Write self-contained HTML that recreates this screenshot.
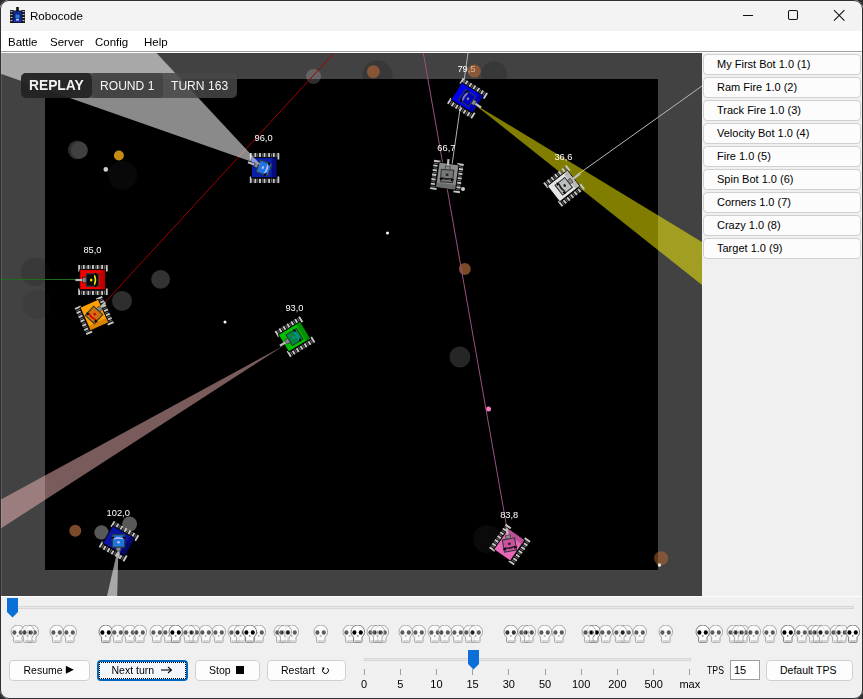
<!DOCTYPE html>
<html><head><meta charset="utf-8">
<style>
html,body{margin:0;padding:0;width:863px;height:699px;overflow:hidden;background:#2b2d31;}
*{box-sizing:border-box;}
body{font-family:"Liberation Sans", sans-serif;position:relative;}
#win{position:absolute;left:0;top:0;width:863px;height:699px;border-radius:9px;background:#f0f0f0;overflow:hidden;}
#frame{position:absolute;left:0;top:0;width:863px;height:699px;border-radius:9px;border:1px solid #2f3034;box-shadow:inset 0 0 0 1px rgba(255,255,255,0.12);pointer-events:none;}
.t{position:absolute;white-space:nowrap;color:#000;}
.bb{position:absolute;left:703px;width:158px;height:21px;border:1px solid #d0d0d0;border-radius:4px;background:#fcfcfc;font-size:11px;line-height:19px;padding-left:13px;color:#000;}
.btn{position:absolute;top:660px;height:21px;border:1px solid #d0d0d0;border-radius:4px;background:#fdfdfd;font-size:11px;line-height:19px;text-align:center;color:#000;}
.bt{top:661px;font-size:10.5px;line-height:19px;}
.tl{position:absolute;top:678px;width:40px;text-align:center;font-size:11px;line-height:13px;color:#000;}
</style></head><body>
<div id="win">
<div style="position:absolute;left:0;top:0;width:863px;height:31px;background:#f3f3f3"></div>
<div style="position:absolute;left:0;top:31px;width:863px;height:20px;background:#fff"></div>
<div style="position:absolute;left:0;top:51px;width:863px;height:1px;background:#a0a0a0"></div>
<div style="position:absolute;left:0;top:52px;width:863px;height:1px;background:#fff"></div>
<div style="position:absolute;left:0;top:596px;width:863px;height:1px;background:#fff"></div>
</div>
<svg width="863" height="699" style="position:absolute;left:0;top:0"><defs><clipPath id="bv"><rect x="0" y="53" width="702" height="543"/></clipPath></defs><g clip-path="url(#bv)"><rect x="0" y="53" width="702" height="543" fill="#424242"/><rect x="45" y="79" width="613" height="491" fill="#000"/><circle cx="377.4" cy="75.6" r="15" fill="rgba(0,0,0,0.15)"/><circle cx="494" cy="74.3" r="13" fill="rgba(0,0,0,0.15)"/><circle cx="313.5" cy="76.5" r="7.5" fill="rgba(255,255,255,0.18)"/><circle cx="373.4" cy="71.7" r="6.5" fill="rgba(200,110,50,0.55)"/><circle cx="77.2" cy="149.8" r="9.4" fill="#2c2c2c"/><circle cx="79.3" cy="150.2" r="8.5" fill="#404040"/><circle cx="118.9" cy="155.5" r="5" fill="#c48c12"/><circle cx="122.7" cy="175.3" r="14.5" fill="#080808"/><circle cx="105.8" cy="169.4" r="2.3" fill="#cfcfcf"/><circle cx="35.2" cy="271.7" r="14.3" fill="rgba(25,25,25,0.2)"/><circle cx="37.5" cy="304.3" r="14.5" fill="rgba(25,25,25,0.12)"/><circle cx="160.6" cy="279.4" r="9.4" fill="#333333"/><circle cx="122" cy="300.9" r="10" fill="#2e2e2e"/><circle cx="387.5" cy="233" r="1.5" fill="#ffffff"/><circle cx="225" cy="322" r="1.5" fill="#ffffff"/><circle cx="464.8" cy="269.1" r="6" fill="#7a4a28"/><circle cx="459.9" cy="357" r="10.5" fill="#262626"/><circle cx="488.5" cy="409" r="2.5" fill="#ff7ac0"/><circle cx="75.3" cy="530.8" r="6" fill="#7a4a2a"/><circle cx="101.5" cy="532.5" r="7.2" fill="#585858"/><circle cx="129.6" cy="524" r="7.5" fill="#585858"/><circle cx="487" cy="539" r="14" fill="#0a0a0a"/><circle cx="661.1" cy="558.3" r="7" fill="rgba(190,105,45,0.5)"/><circle cx="659.4" cy="565.1" r="1.8" fill="#dddddd"/><circle cx="463" cy="189" r="2" fill="#cccccc"/><line x1="334" y1="53" x2="98" y2="310" stroke="#a00000" stroke-width="1"/><line x1="423.3" y1="53" x2="509" y2="540" stroke="#9a5080" stroke-width="1"/><line x1="0" y1="279.5" x2="86" y2="279.5" stroke="#1a6e1a" stroke-width="1"/><line x1="468" y1="53" x2="452" y2="165" stroke="#b0b0b0" stroke-width="1"/><line x1="577" y1="175" x2="702" y2="86" stroke="#b8b8b8" stroke-width="1"/><polygon points="472.6,102.9 702,242 702,285" fill="rgba(255,250,0,0.5)"/><polygon points="284,345.4 0,500 0,529" fill="rgba(255,190,190,0.48)"/><polygon points="118.5,546 107,596 117.2,596" fill="rgba(255,255,255,0.54)"/><g transform="translate(264,168) rotate(0) scale(1.0)">
<rect x="-14.20" y="-15" width="1.9" height="6.5" fill="#c8c8c8"/>
<rect x="-9.60" y="-15" width="1.9" height="4.2" fill="#c8c8c8"/>
<rect x="-5.00" y="-15" width="1.9" height="4.2" fill="#c8c8c8"/>
<rect x="-0.40" y="-15" width="1.9" height="4.2" fill="#c8c8c8"/>
<rect x="4.20" y="-15" width="1.9" height="4.2" fill="#c8c8c8"/>
<rect x="8.80" y="-15" width="1.9" height="4.2" fill="#c8c8c8"/>
<rect x="13.40" y="-15" width="1.9" height="6.5" fill="#c8c8c8"/>
<rect x="-11.45" y="-14.7" width="1.1" height="4.2" fill="#606060"/>
<rect x="-6.85" y="-14.7" width="1.1" height="4.2" fill="#606060"/>
<rect x="-2.25" y="-14.7" width="1.1" height="4.2" fill="#606060"/>
<rect x="2.35" y="-14.7" width="1.1" height="4.2" fill="#606060"/>
<rect x="6.95" y="-14.7" width="1.1" height="4.2" fill="#606060"/>
<rect x="11.55" y="-14.7" width="1.1" height="4.2" fill="#606060"/>
<rect x="-14.20" y="8.5" width="1.9" height="6.5" fill="#c8c8c8"/>
<rect x="-9.60" y="10.8" width="1.9" height="4.2" fill="#c8c8c8"/>
<rect x="-5.00" y="10.8" width="1.9" height="4.2" fill="#c8c8c8"/>
<rect x="-0.40" y="10.8" width="1.9" height="4.2" fill="#c8c8c8"/>
<rect x="4.20" y="10.8" width="1.9" height="4.2" fill="#c8c8c8"/>
<rect x="8.80" y="10.8" width="1.9" height="4.2" fill="#c8c8c8"/>
<rect x="13.40" y="8.5" width="1.9" height="6.5" fill="#c8c8c8"/>
<rect x="-11.45" y="10.5" width="1.1" height="4.2" fill="#606060"/>
<rect x="-6.85" y="10.5" width="1.1" height="4.2" fill="#606060"/>
<rect x="-2.25" y="10.5" width="1.1" height="4.2" fill="#606060"/>
<rect x="2.35" y="10.5" width="1.1" height="4.2" fill="#606060"/>
<rect x="6.95" y="10.5" width="1.1" height="4.2" fill="#606060"/>
<rect x="11.55" y="10.5" width="1.1" height="4.2" fill="#606060"/>
<rect x="-12.6" y="-10.3" width="25.4" height="20" fill="#0b1fae" stroke="#000" stroke-width="0.8"/>
<rect x="7.8" y="-9.9" width="4.4" height="19.2" fill="#000060" opacity="0.6"/>
</g>
<g transform="translate(264,168) rotate(-160)">
<rect x="5" y="-1.1" width="12" height="2.2" fill="#bdbdbd"/>
<rect x="5" y="-2.4" width="5" height="4.8" fill="#8a8a8a" stroke="#111" stroke-width="0.5"/>
<rect x="-6.2" y="-6.2" width="12.4" height="12.4" fill="#1e74e0" stroke="#2c3838" stroke-width="1.1"/>
<path d="M-3.2 -7.6 L-1.6 -4.2 L-4.8 -4.2 Z M-3.2 7.6 L-1.6 4.2 L-4.8 4.2 Z" fill="#000"/>
<path d="M-2.2 -4.8 Q-4.8 0 -2.2 4.8 Q-3.2 0 -2.2 -4.8 Z" fill="#b8b8ff" stroke="#b8b8ff" stroke-width="1"/>
<ellipse cx="1.2" cy="0" rx="1.2" ry="1.5" fill="#b8b8ff"/>
</g><g transform="translate(467,98) rotate(32) scale(1.0)">
<rect x="-14.20" y="-15" width="1.9" height="6.5" fill="#c8c8c8"/>
<rect x="-9.60" y="-15" width="1.9" height="4.2" fill="#c8c8c8"/>
<rect x="-5.00" y="-15" width="1.9" height="4.2" fill="#c8c8c8"/>
<rect x="-0.40" y="-15" width="1.9" height="4.2" fill="#c8c8c8"/>
<rect x="4.20" y="-15" width="1.9" height="4.2" fill="#c8c8c8"/>
<rect x="8.80" y="-15" width="1.9" height="4.2" fill="#c8c8c8"/>
<rect x="13.40" y="-15" width="1.9" height="6.5" fill="#c8c8c8"/>
<rect x="-11.45" y="-14.7" width="1.1" height="4.2" fill="#606060"/>
<rect x="-6.85" y="-14.7" width="1.1" height="4.2" fill="#606060"/>
<rect x="-2.25" y="-14.7" width="1.1" height="4.2" fill="#606060"/>
<rect x="2.35" y="-14.7" width="1.1" height="4.2" fill="#606060"/>
<rect x="6.95" y="-14.7" width="1.1" height="4.2" fill="#606060"/>
<rect x="11.55" y="-14.7" width="1.1" height="4.2" fill="#606060"/>
<rect x="-14.20" y="8.5" width="1.9" height="6.5" fill="#c8c8c8"/>
<rect x="-9.60" y="10.8" width="1.9" height="4.2" fill="#c8c8c8"/>
<rect x="-5.00" y="10.8" width="1.9" height="4.2" fill="#c8c8c8"/>
<rect x="-0.40" y="10.8" width="1.9" height="4.2" fill="#c8c8c8"/>
<rect x="4.20" y="10.8" width="1.9" height="4.2" fill="#c8c8c8"/>
<rect x="8.80" y="10.8" width="1.9" height="4.2" fill="#c8c8c8"/>
<rect x="13.40" y="8.5" width="1.9" height="6.5" fill="#c8c8c8"/>
<rect x="-11.45" y="10.5" width="1.1" height="4.2" fill="#606060"/>
<rect x="-6.85" y="10.5" width="1.1" height="4.2" fill="#606060"/>
<rect x="-2.25" y="10.5" width="1.1" height="4.2" fill="#606060"/>
<rect x="2.35" y="10.5" width="1.1" height="4.2" fill="#606060"/>
<rect x="6.95" y="10.5" width="1.1" height="4.2" fill="#606060"/>
<rect x="11.55" y="10.5" width="1.1" height="4.2" fill="#606060"/>
<rect x="-12.6" y="-10.3" width="25.4" height="20" fill="#0000f0" stroke="#000" stroke-width="0.8"/>
<rect x="7.8" y="-9.9" width="4.4" height="19.2" fill="#000080" opacity="0.6"/>
</g>
<g transform="translate(467,98) rotate(34)">
<rect x="5" y="-1.1" width="12" height="2.2" fill="#bdbdbd"/>
<rect x="5" y="-2.4" width="5" height="4.8" fill="#8a8a8a" stroke="#111" stroke-width="0.5"/>
<rect x="-6.2" y="-6.2" width="12.4" height="12.4" fill="#0000c0" stroke="#2c3838" stroke-width="1.1"/>
<path d="M-3.2 -7.6 L-1.6 -4.2 L-4.8 -4.2 Z M-3.2 7.6 L-1.6 4.2 L-4.8 4.2 Z" fill="#000"/>
<path d="M-2.2 -4.8 Q-4.8 0 -2.2 4.8 Q-3.2 0 -2.2 -4.8 Z" fill="#888888" stroke="#888888" stroke-width="1"/>
<ellipse cx="1.2" cy="0" rx="1.2" ry="1.5" fill="#888888"/>
</g><g transform="translate(447,176) rotate(98) scale(1.0)">
<rect x="-14.20" y="-15" width="1.9" height="6.5" fill="#c8c8c8"/>
<rect x="-9.60" y="-15" width="1.9" height="4.2" fill="#c8c8c8"/>
<rect x="-5.00" y="-15" width="1.9" height="4.2" fill="#c8c8c8"/>
<rect x="-0.40" y="-15" width="1.9" height="4.2" fill="#c8c8c8"/>
<rect x="4.20" y="-15" width="1.9" height="4.2" fill="#c8c8c8"/>
<rect x="8.80" y="-15" width="1.9" height="4.2" fill="#c8c8c8"/>
<rect x="13.40" y="-15" width="1.9" height="6.5" fill="#c8c8c8"/>
<rect x="-11.45" y="-14.7" width="1.1" height="4.2" fill="#606060"/>
<rect x="-6.85" y="-14.7" width="1.1" height="4.2" fill="#606060"/>
<rect x="-2.25" y="-14.7" width="1.1" height="4.2" fill="#606060"/>
<rect x="2.35" y="-14.7" width="1.1" height="4.2" fill="#606060"/>
<rect x="6.95" y="-14.7" width="1.1" height="4.2" fill="#606060"/>
<rect x="11.55" y="-14.7" width="1.1" height="4.2" fill="#606060"/>
<rect x="-14.20" y="8.5" width="1.9" height="6.5" fill="#c8c8c8"/>
<rect x="-9.60" y="10.8" width="1.9" height="4.2" fill="#c8c8c8"/>
<rect x="-5.00" y="10.8" width="1.9" height="4.2" fill="#c8c8c8"/>
<rect x="-0.40" y="10.8" width="1.9" height="4.2" fill="#c8c8c8"/>
<rect x="4.20" y="10.8" width="1.9" height="4.2" fill="#c8c8c8"/>
<rect x="8.80" y="10.8" width="1.9" height="4.2" fill="#c8c8c8"/>
<rect x="13.40" y="8.5" width="1.9" height="6.5" fill="#c8c8c8"/>
<rect x="-11.45" y="10.5" width="1.1" height="4.2" fill="#606060"/>
<rect x="-6.85" y="10.5" width="1.1" height="4.2" fill="#606060"/>
<rect x="-2.25" y="10.5" width="1.1" height="4.2" fill="#606060"/>
<rect x="2.35" y="10.5" width="1.1" height="4.2" fill="#606060"/>
<rect x="6.95" y="10.5" width="1.1" height="4.2" fill="#606060"/>
<rect x="11.55" y="10.5" width="1.1" height="4.2" fill="#606060"/>
<rect x="-12.6" y="-10.3" width="25.4" height="20" fill="#8c8c8c" stroke="#000" stroke-width="0.8"/>
<rect x="7.8" y="-9.9" width="4.4" height="19.2" fill="#555" opacity="0.6"/>
</g>
<g transform="translate(447,176) rotate(-85)">
<rect x="5" y="-1.1" width="12" height="2.2" fill="#bdbdbd"/>
<rect x="5" y="-2.4" width="5" height="4.8" fill="#8a8a8a" stroke="#111" stroke-width="0.5"/>
<rect x="-6.2" y="-6.2" width="12.4" height="12.4" fill="#777777" stroke="#2c3838" stroke-width="1.1"/>
<path d="M-3.2 -7.6 L-1.6 -4.2 L-4.8 -4.2 Z M-3.2 7.6 L-1.6 4.2 L-4.8 4.2 Z" fill="#000"/>
<path d="M-2.2 -4.8 Q-4.8 0 -2.2 4.8 Q-3.2 0 -2.2 -4.8 Z" fill="#222" stroke="#222" stroke-width="1"/>
<ellipse cx="1.2" cy="0" rx="1.2" ry="1.5" fill="#222"/>
</g><g transform="translate(563.7,186.3) rotate(-38) scale(1.0)">
<rect x="-14.20" y="-15" width="1.9" height="6.5" fill="#c8c8c8"/>
<rect x="-9.60" y="-15" width="1.9" height="4.2" fill="#c8c8c8"/>
<rect x="-5.00" y="-15" width="1.9" height="4.2" fill="#c8c8c8"/>
<rect x="-0.40" y="-15" width="1.9" height="4.2" fill="#c8c8c8"/>
<rect x="4.20" y="-15" width="1.9" height="4.2" fill="#c8c8c8"/>
<rect x="8.80" y="-15" width="1.9" height="4.2" fill="#c8c8c8"/>
<rect x="13.40" y="-15" width="1.9" height="6.5" fill="#c8c8c8"/>
<rect x="-11.45" y="-14.7" width="1.1" height="4.2" fill="#606060"/>
<rect x="-6.85" y="-14.7" width="1.1" height="4.2" fill="#606060"/>
<rect x="-2.25" y="-14.7" width="1.1" height="4.2" fill="#606060"/>
<rect x="2.35" y="-14.7" width="1.1" height="4.2" fill="#606060"/>
<rect x="6.95" y="-14.7" width="1.1" height="4.2" fill="#606060"/>
<rect x="11.55" y="-14.7" width="1.1" height="4.2" fill="#606060"/>
<rect x="-14.20" y="8.5" width="1.9" height="6.5" fill="#c8c8c8"/>
<rect x="-9.60" y="10.8" width="1.9" height="4.2" fill="#c8c8c8"/>
<rect x="-5.00" y="10.8" width="1.9" height="4.2" fill="#c8c8c8"/>
<rect x="-0.40" y="10.8" width="1.9" height="4.2" fill="#c8c8c8"/>
<rect x="4.20" y="10.8" width="1.9" height="4.2" fill="#c8c8c8"/>
<rect x="8.80" y="10.8" width="1.9" height="4.2" fill="#c8c8c8"/>
<rect x="13.40" y="8.5" width="1.9" height="6.5" fill="#c8c8c8"/>
<rect x="-11.45" y="10.5" width="1.1" height="4.2" fill="#606060"/>
<rect x="-6.85" y="10.5" width="1.1" height="4.2" fill="#606060"/>
<rect x="-2.25" y="10.5" width="1.1" height="4.2" fill="#606060"/>
<rect x="2.35" y="10.5" width="1.1" height="4.2" fill="#606060"/>
<rect x="6.95" y="10.5" width="1.1" height="4.2" fill="#606060"/>
<rect x="11.55" y="10.5" width="1.1" height="4.2" fill="#606060"/>
<rect x="-12.6" y="-10.3" width="25.4" height="20" fill="#e6e6e6" stroke="#000" stroke-width="0.8"/>
<rect x="7.8" y="-9.9" width="4.4" height="19.2" fill="#999" opacity="0.6"/>
</g>
<g transform="translate(563.7,186.3) rotate(-38)">
<rect x="5" y="-1.1" width="16" height="2.2" fill="#bdbdbd"/>
<rect x="5" y="-2.4" width="5" height="4.8" fill="#8a8a8a" stroke="#111" stroke-width="0.5"/>
<rect x="-6.2" y="-6.2" width="12.4" height="12.4" fill="#bdbdbd" stroke="#2c3838" stroke-width="1.1"/>
<path d="M-3.2 -7.6 L-1.6 -4.2 L-4.8 -4.2 Z M-3.2 7.6 L-1.6 4.2 L-4.8 4.2 Z" fill="#000"/>
<path d="M-2.2 -4.8 Q-4.8 0 -2.2 4.8 Q-3.2 0 -2.2 -4.8 Z" fill="#222" stroke="#222" stroke-width="1"/>
<ellipse cx="1.2" cy="0" rx="1.2" ry="1.5" fill="#222"/>
</g><g transform="translate(92.4,280) rotate(0) scale(1.0)">
<rect x="-14.20" y="-15" width="1.9" height="6.5" fill="#c8c8c8"/>
<rect x="-9.60" y="-15" width="1.9" height="4.2" fill="#c8c8c8"/>
<rect x="-5.00" y="-15" width="1.9" height="4.2" fill="#c8c8c8"/>
<rect x="-0.40" y="-15" width="1.9" height="4.2" fill="#c8c8c8"/>
<rect x="4.20" y="-15" width="1.9" height="4.2" fill="#c8c8c8"/>
<rect x="8.80" y="-15" width="1.9" height="4.2" fill="#c8c8c8"/>
<rect x="13.40" y="-15" width="1.9" height="6.5" fill="#c8c8c8"/>
<rect x="-11.45" y="-14.7" width="1.1" height="4.2" fill="#606060"/>
<rect x="-6.85" y="-14.7" width="1.1" height="4.2" fill="#606060"/>
<rect x="-2.25" y="-14.7" width="1.1" height="4.2" fill="#606060"/>
<rect x="2.35" y="-14.7" width="1.1" height="4.2" fill="#606060"/>
<rect x="6.95" y="-14.7" width="1.1" height="4.2" fill="#606060"/>
<rect x="11.55" y="-14.7" width="1.1" height="4.2" fill="#606060"/>
<rect x="-14.20" y="8.5" width="1.9" height="6.5" fill="#c8c8c8"/>
<rect x="-9.60" y="10.8" width="1.9" height="4.2" fill="#c8c8c8"/>
<rect x="-5.00" y="10.8" width="1.9" height="4.2" fill="#c8c8c8"/>
<rect x="-0.40" y="10.8" width="1.9" height="4.2" fill="#c8c8c8"/>
<rect x="4.20" y="10.8" width="1.9" height="4.2" fill="#c8c8c8"/>
<rect x="8.80" y="10.8" width="1.9" height="4.2" fill="#c8c8c8"/>
<rect x="13.40" y="8.5" width="1.9" height="6.5" fill="#c8c8c8"/>
<rect x="-11.45" y="10.5" width="1.1" height="4.2" fill="#606060"/>
<rect x="-6.85" y="10.5" width="1.1" height="4.2" fill="#606060"/>
<rect x="-2.25" y="10.5" width="1.1" height="4.2" fill="#606060"/>
<rect x="2.35" y="10.5" width="1.1" height="4.2" fill="#606060"/>
<rect x="6.95" y="10.5" width="1.1" height="4.2" fill="#606060"/>
<rect x="11.55" y="10.5" width="1.1" height="4.2" fill="#606060"/>
<rect x="-12.6" y="-10.3" width="25.4" height="20" fill="#f00000" stroke="#000" stroke-width="0.8"/>
<rect x="7.8" y="-9.9" width="4.4" height="19.2" fill="#a00000" opacity="0.6"/>
</g>
<g transform="translate(92.4,280) rotate(180)">
<rect x="5" y="-1.1" width="12" height="2.2" fill="#bdbdbd"/>
<rect x="5" y="-2.4" width="5" height="4.8" fill="#8a8a8a" stroke="#111" stroke-width="0.5"/>
<rect x="-6.2" y="-6.2" width="12.4" height="12.4" fill="#0a0a0a" stroke="#2c3838" stroke-width="1.1"/>
<path d="M-3.2 -7.6 L-1.6 -4.2 L-4.8 -4.2 Z M-3.2 7.6 L-1.6 4.2 L-4.8 4.2 Z" fill="#000"/>
<path d="M-2.2 -4.8 Q-4.8 0 -2.2 4.8 Q-3.2 0 -2.2 -4.8 Z" fill="#f0f000" stroke="#f0f000" stroke-width="1"/>
<ellipse cx="1.2" cy="0" rx="1.2" ry="1.5" fill="#f0f000"/>
</g><g transform="translate(94,315) rotate(66) scale(1.0)">
<rect x="-14.20" y="-15" width="1.9" height="6.5" fill="#c8c8c8"/>
<rect x="-9.60" y="-15" width="1.9" height="4.2" fill="#c8c8c8"/>
<rect x="-5.00" y="-15" width="1.9" height="4.2" fill="#c8c8c8"/>
<rect x="-0.40" y="-15" width="1.9" height="4.2" fill="#c8c8c8"/>
<rect x="4.20" y="-15" width="1.9" height="4.2" fill="#c8c8c8"/>
<rect x="8.80" y="-15" width="1.9" height="4.2" fill="#c8c8c8"/>
<rect x="13.40" y="-15" width="1.9" height="6.5" fill="#c8c8c8"/>
<rect x="-11.45" y="-14.7" width="1.1" height="4.2" fill="#606060"/>
<rect x="-6.85" y="-14.7" width="1.1" height="4.2" fill="#606060"/>
<rect x="-2.25" y="-14.7" width="1.1" height="4.2" fill="#606060"/>
<rect x="2.35" y="-14.7" width="1.1" height="4.2" fill="#606060"/>
<rect x="6.95" y="-14.7" width="1.1" height="4.2" fill="#606060"/>
<rect x="11.55" y="-14.7" width="1.1" height="4.2" fill="#606060"/>
<rect x="-14.20" y="8.5" width="1.9" height="6.5" fill="#c8c8c8"/>
<rect x="-9.60" y="10.8" width="1.9" height="4.2" fill="#c8c8c8"/>
<rect x="-5.00" y="10.8" width="1.9" height="4.2" fill="#c8c8c8"/>
<rect x="-0.40" y="10.8" width="1.9" height="4.2" fill="#c8c8c8"/>
<rect x="4.20" y="10.8" width="1.9" height="4.2" fill="#c8c8c8"/>
<rect x="8.80" y="10.8" width="1.9" height="4.2" fill="#c8c8c8"/>
<rect x="13.40" y="8.5" width="1.9" height="6.5" fill="#c8c8c8"/>
<rect x="-11.45" y="10.5" width="1.1" height="4.2" fill="#606060"/>
<rect x="-6.85" y="10.5" width="1.1" height="4.2" fill="#606060"/>
<rect x="-2.25" y="10.5" width="1.1" height="4.2" fill="#606060"/>
<rect x="2.35" y="10.5" width="1.1" height="4.2" fill="#606060"/>
<rect x="6.95" y="10.5" width="1.1" height="4.2" fill="#606060"/>
<rect x="11.55" y="10.5" width="1.1" height="4.2" fill="#606060"/>
<rect x="-12.6" y="-10.3" width="25.4" height="20" fill="#ffa000" stroke="#000" stroke-width="0.8"/>
<rect x="7.8" y="-9.9" width="4.4" height="19.2" fill="#c07000" opacity="0.6"/>
</g>
<g transform="translate(94,315) rotate(-48)">
<rect x="5" y="-1.1" width="12" height="2.2" fill="#bdbdbd"/>
<rect x="5" y="-2.4" width="5" height="4.8" fill="#8a8a8a" stroke="#111" stroke-width="0.5"/>
<rect x="-6.2" y="-6.2" width="12.4" height="12.4" fill="#d07010" stroke="#2c3838" stroke-width="1.1"/>
<path d="M-3.2 -7.6 L-1.6 -4.2 L-4.8 -4.2 Z M-3.2 7.6 L-1.6 4.2 L-4.8 4.2 Z" fill="#000"/>
<path d="M-2.2 -4.8 Q-4.8 0 -2.2 4.8 Q-3.2 0 -2.2 -4.8 Z" fill="#d00000" stroke="#d00000" stroke-width="1"/>
<ellipse cx="1.2" cy="0" rx="1.2" ry="1.5" fill="#d00000"/>
</g><g transform="translate(294.5,337) rotate(-31) scale(1.0)">
<rect x="-14.20" y="-15" width="1.9" height="6.5" fill="#c8c8c8"/>
<rect x="-9.60" y="-15" width="1.9" height="4.2" fill="#c8c8c8"/>
<rect x="-5.00" y="-15" width="1.9" height="4.2" fill="#c8c8c8"/>
<rect x="-0.40" y="-15" width="1.9" height="4.2" fill="#c8c8c8"/>
<rect x="4.20" y="-15" width="1.9" height="4.2" fill="#c8c8c8"/>
<rect x="8.80" y="-15" width="1.9" height="4.2" fill="#c8c8c8"/>
<rect x="13.40" y="-15" width="1.9" height="6.5" fill="#c8c8c8"/>
<rect x="-11.45" y="-14.7" width="1.1" height="4.2" fill="#606060"/>
<rect x="-6.85" y="-14.7" width="1.1" height="4.2" fill="#606060"/>
<rect x="-2.25" y="-14.7" width="1.1" height="4.2" fill="#606060"/>
<rect x="2.35" y="-14.7" width="1.1" height="4.2" fill="#606060"/>
<rect x="6.95" y="-14.7" width="1.1" height="4.2" fill="#606060"/>
<rect x="11.55" y="-14.7" width="1.1" height="4.2" fill="#606060"/>
<rect x="-14.20" y="8.5" width="1.9" height="6.5" fill="#c8c8c8"/>
<rect x="-9.60" y="10.8" width="1.9" height="4.2" fill="#c8c8c8"/>
<rect x="-5.00" y="10.8" width="1.9" height="4.2" fill="#c8c8c8"/>
<rect x="-0.40" y="10.8" width="1.9" height="4.2" fill="#c8c8c8"/>
<rect x="4.20" y="10.8" width="1.9" height="4.2" fill="#c8c8c8"/>
<rect x="8.80" y="10.8" width="1.9" height="4.2" fill="#c8c8c8"/>
<rect x="13.40" y="8.5" width="1.9" height="6.5" fill="#c8c8c8"/>
<rect x="-11.45" y="10.5" width="1.1" height="4.2" fill="#606060"/>
<rect x="-6.85" y="10.5" width="1.1" height="4.2" fill="#606060"/>
<rect x="-2.25" y="10.5" width="1.1" height="4.2" fill="#606060"/>
<rect x="2.35" y="10.5" width="1.1" height="4.2" fill="#606060"/>
<rect x="6.95" y="10.5" width="1.1" height="4.2" fill="#606060"/>
<rect x="11.55" y="10.5" width="1.1" height="4.2" fill="#606060"/>
<rect x="-12.6" y="-10.3" width="25.4" height="20" fill="#00c000" stroke="#000" stroke-width="0.8"/>
<rect x="7.8" y="-9.9" width="4.4" height="19.2" fill="#007000" opacity="0.6"/>
</g>
<g transform="translate(294.5,337) rotate(149)">
<rect x="5" y="-1.1" width="12" height="2.2" fill="#bdbdbd"/>
<rect x="5" y="-2.4" width="5" height="4.8" fill="#8a8a8a" stroke="#111" stroke-width="0.5"/>
<rect x="-6.2" y="-6.2" width="12.4" height="12.4" fill="#008840" stroke="#2c3838" stroke-width="1.1"/>
<path d="M-3.2 -7.6 L-1.6 -4.2 L-4.8 -4.2 Z M-3.2 7.6 L-1.6 4.2 L-4.8 4.2 Z" fill="#000"/>
<path d="M-2.2 -4.8 Q-4.8 0 -2.2 4.8 Q-3.2 0 -2.2 -4.8 Z" fill="#0090a0" stroke="#0090a0" stroke-width="1"/>
<ellipse cx="1.2" cy="0" rx="1.2" ry="1.5" fill="#0090a0"/>
</g><g transform="translate(118.5,541) rotate(30) scale(1.0)">
<rect x="-14.20" y="-15" width="1.9" height="6.5" fill="#c8c8c8"/>
<rect x="-9.60" y="-15" width="1.9" height="4.2" fill="#c8c8c8"/>
<rect x="-5.00" y="-15" width="1.9" height="4.2" fill="#c8c8c8"/>
<rect x="-0.40" y="-15" width="1.9" height="4.2" fill="#c8c8c8"/>
<rect x="4.20" y="-15" width="1.9" height="4.2" fill="#c8c8c8"/>
<rect x="8.80" y="-15" width="1.9" height="4.2" fill="#c8c8c8"/>
<rect x="13.40" y="-15" width="1.9" height="6.5" fill="#c8c8c8"/>
<rect x="-11.45" y="-14.7" width="1.1" height="4.2" fill="#606060"/>
<rect x="-6.85" y="-14.7" width="1.1" height="4.2" fill="#606060"/>
<rect x="-2.25" y="-14.7" width="1.1" height="4.2" fill="#606060"/>
<rect x="2.35" y="-14.7" width="1.1" height="4.2" fill="#606060"/>
<rect x="6.95" y="-14.7" width="1.1" height="4.2" fill="#606060"/>
<rect x="11.55" y="-14.7" width="1.1" height="4.2" fill="#606060"/>
<rect x="-14.20" y="8.5" width="1.9" height="6.5" fill="#c8c8c8"/>
<rect x="-9.60" y="10.8" width="1.9" height="4.2" fill="#c8c8c8"/>
<rect x="-5.00" y="10.8" width="1.9" height="4.2" fill="#c8c8c8"/>
<rect x="-0.40" y="10.8" width="1.9" height="4.2" fill="#c8c8c8"/>
<rect x="4.20" y="10.8" width="1.9" height="4.2" fill="#c8c8c8"/>
<rect x="8.80" y="10.8" width="1.9" height="4.2" fill="#c8c8c8"/>
<rect x="13.40" y="8.5" width="1.9" height="6.5" fill="#c8c8c8"/>
<rect x="-11.45" y="10.5" width="1.1" height="4.2" fill="#606060"/>
<rect x="-6.85" y="10.5" width="1.1" height="4.2" fill="#606060"/>
<rect x="-2.25" y="10.5" width="1.1" height="4.2" fill="#606060"/>
<rect x="2.35" y="10.5" width="1.1" height="4.2" fill="#606060"/>
<rect x="6.95" y="10.5" width="1.1" height="4.2" fill="#606060"/>
<rect x="11.55" y="10.5" width="1.1" height="4.2" fill="#606060"/>
<rect x="-12.6" y="-10.3" width="25.4" height="20" fill="#0a14a0" stroke="#000" stroke-width="0.8"/>
<rect x="7.8" y="-9.9" width="4.4" height="19.2" fill="#000050" opacity="0.6"/>
</g>
<g transform="translate(118.5,541) rotate(90)">
<rect x="5" y="-1.1" width="12" height="2.2" fill="#bdbdbd"/>
<rect x="5" y="-2.4" width="5" height="4.8" fill="#8a8a8a" stroke="#111" stroke-width="0.5"/>
<rect x="-6.2" y="-6.2" width="12.4" height="12.4" fill="#1e78dc" stroke="#2c3838" stroke-width="1.1"/>
<path d="M-3.2 -7.6 L-1.6 -4.2 L-4.8 -4.2 Z M-3.2 7.6 L-1.6 4.2 L-4.8 4.2 Z" fill="#000"/>
<path d="M-2.2 -4.8 Q-4.8 0 -2.2 4.8 Q-3.2 0 -2.2 -4.8 Z" fill="#c0b0ff" stroke="#c0b0ff" stroke-width="1"/>
<ellipse cx="1.2" cy="0" rx="1.2" ry="1.5" fill="#c0b0ff"/>
</g><g transform="translate(509.5,545) rotate(-55) scale(1.0)">
<rect x="-14.20" y="-15" width="1.9" height="6.5" fill="#c8c8c8"/>
<rect x="-9.60" y="-15" width="1.9" height="4.2" fill="#c8c8c8"/>
<rect x="-5.00" y="-15" width="1.9" height="4.2" fill="#c8c8c8"/>
<rect x="-0.40" y="-15" width="1.9" height="4.2" fill="#c8c8c8"/>
<rect x="4.20" y="-15" width="1.9" height="4.2" fill="#c8c8c8"/>
<rect x="8.80" y="-15" width="1.9" height="4.2" fill="#c8c8c8"/>
<rect x="13.40" y="-15" width="1.9" height="6.5" fill="#c8c8c8"/>
<rect x="-11.45" y="-14.7" width="1.1" height="4.2" fill="#606060"/>
<rect x="-6.85" y="-14.7" width="1.1" height="4.2" fill="#606060"/>
<rect x="-2.25" y="-14.7" width="1.1" height="4.2" fill="#606060"/>
<rect x="2.35" y="-14.7" width="1.1" height="4.2" fill="#606060"/>
<rect x="6.95" y="-14.7" width="1.1" height="4.2" fill="#606060"/>
<rect x="11.55" y="-14.7" width="1.1" height="4.2" fill="#606060"/>
<rect x="-14.20" y="8.5" width="1.9" height="6.5" fill="#c8c8c8"/>
<rect x="-9.60" y="10.8" width="1.9" height="4.2" fill="#c8c8c8"/>
<rect x="-5.00" y="10.8" width="1.9" height="4.2" fill="#c8c8c8"/>
<rect x="-0.40" y="10.8" width="1.9" height="4.2" fill="#c8c8c8"/>
<rect x="4.20" y="10.8" width="1.9" height="4.2" fill="#c8c8c8"/>
<rect x="8.80" y="10.8" width="1.9" height="4.2" fill="#c8c8c8"/>
<rect x="13.40" y="8.5" width="1.9" height="6.5" fill="#c8c8c8"/>
<rect x="-11.45" y="10.5" width="1.1" height="4.2" fill="#606060"/>
<rect x="-6.85" y="10.5" width="1.1" height="4.2" fill="#606060"/>
<rect x="-2.25" y="10.5" width="1.1" height="4.2" fill="#606060"/>
<rect x="2.35" y="10.5" width="1.1" height="4.2" fill="#606060"/>
<rect x="6.95" y="10.5" width="1.1" height="4.2" fill="#606060"/>
<rect x="11.55" y="10.5" width="1.1" height="4.2" fill="#606060"/>
<rect x="-12.6" y="-10.3" width="25.4" height="20" fill="#e868b8" stroke="#000" stroke-width="0.8"/>
<rect x="7.8" y="-9.9" width="4.4" height="19.2" fill="#a04080" opacity="0.6"/>
</g>
<g transform="translate(509.5,545) rotate(-100)">
<rect x="5" y="-1.1" width="12" height="2.2" fill="#bdbdbd"/>
<rect x="5" y="-2.4" width="5" height="4.8" fill="#8a8a8a" stroke="#111" stroke-width="0.5"/>
<rect x="-6.2" y="-6.2" width="12.4" height="12.4" fill="#d050a0" stroke="#2c3838" stroke-width="1.1"/>
<path d="M-3.2 -7.6 L-1.6 -4.2 L-4.8 -4.2 Z M-3.2 7.6 L-1.6 4.2 L-4.8 4.2 Z" fill="#000"/>
<path d="M-2.2 -4.8 Q-4.8 0 -2.2 4.8 Q-3.2 0 -2.2 -4.8 Z" fill="#222" stroke="#222" stroke-width="1"/>
<ellipse cx="1.2" cy="0" rx="1.2" ry="1.5" fill="#222"/>
</g><polygon points="261,165 156.5,53 0,53 0,73.5" fill="rgba(255,255,255,0.54)"/></g></svg><svg width="863" height="699" style="position:absolute;left:0;top:0;will-change:transform"><text x="263.6" y="141" text-anchor="middle" font-family="Liberation Sans" font-size="9.3" fill="#fff" >96,0</text><text x="466.5" y="72" text-anchor="middle" font-family="Liberation Sans" font-size="9.3" fill="#fff" >79,5</text><text x="446.4" y="151" text-anchor="middle" font-family="Liberation Sans" font-size="9.3" fill="#fff" >66,7</text><text x="563.5" y="160" text-anchor="middle" font-family="Liberation Sans" font-size="9.3" fill="#fff" >36,6</text><text x="92.5" y="253" text-anchor="middle" font-family="Liberation Sans" font-size="9.3" fill="#fff" >85,0</text><text x="294.5" y="311" text-anchor="middle" font-family="Liberation Sans" font-size="9.3" fill="#fff" >93,0</text><text x="118.2" y="516" text-anchor="middle" font-family="Liberation Sans" font-size="9.3" fill="#fff" >102,0</text><text x="509.2" y="518" text-anchor="middle" font-family="Liberation Sans" font-size="9.3" fill="#fff" >83,8</text><circle cx="474.3" cy="71.1" r="6.5" fill="rgba(200,110,50,0.55)"/></svg>
<svg style="position:absolute;left:736px;top:5px" width="120" height="22">
<line x1="7" y1="10.5" x2="17" y2="10.5" stroke="#111" stroke-width="1"/>
<rect x="52.5" y="5.5" width="9" height="9" rx="1.5" fill="none" stroke="#111" stroke-width="1.05"/>
<path d="M98 5.2 L108.4 15.6 M108.4 5.2 L98 15.6" stroke="#111" stroke-width="1.1"/>
</svg>
<svg style="position:absolute;left:10px;top:7px" width="15" height="17" viewBox="0 0 15 17">
<rect x="6.2" y="0" width="2.6" height="5" fill="#111"/>
<rect x="0" y="3" width="3.5" height="13" fill="#222"/><rect x="11.5" y="3" width="3.5" height="13" fill="#222"/>
<rect x="0.5" y="4" width="2.5" height="1" fill="#bbb"/><rect x="0.5" y="7" width="2.5" height="1" fill="#bbb"/><rect x="0.5" y="10" width="2.5" height="1" fill="#bbb"/><rect x="0.5" y="13" width="2.5" height="1" fill="#bbb"/>
<rect x="12" y="4" width="2.5" height="1" fill="#bbb"/><rect x="12" y="7" width="2.5" height="1" fill="#bbb"/><rect x="12" y="10" width="2.5" height="1" fill="#bbb"/><rect x="12" y="13" width="2.5" height="1" fill="#bbb"/>
<rect x="3" y="4" width="9" height="11.5" fill="#1530b8" stroke="#000" stroke-width="0.8"/>
<rect x="5" y="7" width="5" height="5" fill="#2a7ae0" stroke="#000" stroke-width="0.6"/>
<rect x="6" y="12" width="3" height="1.5" fill="#c8c0ff"/>
</svg>
<div class="t" style="left:30px;top:9px;font-size:11.6px;line-height:14px">Robocode</div>
<div class="t" style="left:8px;top:35px;font-size:11.5px;line-height:14px">Battle</div>
<div class="t" style="left:50px;top:35px;font-size:11.5px;line-height:14px">Server</div>
<div class="t" style="left:95px;top:35px;font-size:11.5px;line-height:14px">Config</div>
<div class="t" style="left:144px;top:35px;font-size:11.5px;line-height:14px">Help</div>
<!-- overlay -->
<div style="position:absolute;left:21px;top:73px;width:216px;height:25px;border-radius:5px;background:rgba(70,70,70,0.85)"></div>
<div style="position:absolute;left:21px;top:73px;width:71px;height:25px;border-radius:5px;background:rgba(25,25,25,0.75)"></div>
<div style="position:absolute;left:92px;top:73px;width:71px;height:25px;border-radius:4px;background:rgba(40,40,40,0.3)"></div>
<div class="t" style="left:29px;top:78px;font-size:13.8px;font-weight:bold;line-height:16px;color:#f2f2f2">REPLAY</div>
<div class="t" style="left:100px;top:78px;font-size:12.1px;line-height:16px;color:#f6f6f6">ROUND 1</div>
<div class="t" style="left:171px;top:78px;font-size:12.1px;line-height:16px;color:#f6f6f6">TURN 163</div>
<div style="position:absolute;left:702px;top:53px;width:160px;height:543px;background:#f0f0f0"></div>
<div class="bb" style="top:54px">My First Bot 1.0 (1)</div>
<div class="bb" style="top:77px">Ram Fire 1.0 (2)</div>
<div class="bb" style="top:100px">Track Fire 1.0 (3)</div>
<div class="bb" style="top:123px">Velocity Bot 1.0 (4)</div>
<div class="bb" style="top:146px">Fire 1.0 (5)</div>
<div class="bb" style="top:169px">Spin Bot 1.0 (6)</div>
<div class="bb" style="top:192px">Corners 1.0 (7)</div>
<div class="bb" style="top:215px">Crazy 1.0 (8)</div>
<div class="bb" style="top:238px">Target 1.0 (9)</div>
<!-- slider -->
<div style="position:absolute;left:7px;top:606px;width:847px;height:3px;border:1px solid #d6d6d6;background:#e8e8e8"></div>
<svg style="position:absolute;left:7px;top:598px" width="12" height="20"><path d="M0 0 H11 V14 L5.5 19.5 L0 14 Z" fill="#0a6fd6"/></svg>
<svg style="position:absolute;left:9.5px;top:624.5px;opacity:0.62" width="16" height="19" viewBox="-0.5 -0.5 16 19"><path d="M3.1 11.65 A6.8 6.8 0 1 1 11.5 11.65 L11.5 16.2 Q11.5 16.8 10.9 16.8 L3.7 16.8 Q3.1 16.8 3.1 16.2 Z" fill="#fff" stroke="#7a7a7a" stroke-width="1"/><ellipse cx="3.9" cy="6.9" rx="2.05" ry="2.25" fill="#000"/><ellipse cx="10.3" cy="6.9" rx="2.05" ry="2.25" fill="#000"/><ellipse cx="7.2" cy="10.4" rx="1" ry="0.6" fill="#555"/><rect x="4.2" y="14.6" width="6.2" height="1.8" fill="#c4c4c4"/></svg>
<svg style="position:absolute;left:23.5px;top:624.5px;opacity:0.62" width="16" height="19" viewBox="-0.5 -0.5 16 19"><path d="M3.1 11.65 A6.8 6.8 0 1 1 11.5 11.65 L11.5 16.2 Q11.5 16.8 10.9 16.8 L3.7 16.8 Q3.1 16.8 3.1 16.2 Z" fill="#fff" stroke="#7a7a7a" stroke-width="1"/><ellipse cx="3.9" cy="6.9" rx="2.05" ry="2.25" fill="#000"/><ellipse cx="10.3" cy="6.9" rx="2.05" ry="2.25" fill="#000"/><ellipse cx="7.2" cy="10.4" rx="1" ry="0.6" fill="#555"/><rect x="4.2" y="14.6" width="6.2" height="1.8" fill="#c4c4c4"/></svg>
<svg style="position:absolute;left:19.5px;top:624.5px;opacity:0.62" width="16" height="19" viewBox="-0.5 -0.5 16 19"><path d="M3.1 11.65 A6.8 6.8 0 1 1 11.5 11.65 L11.5 16.2 Q11.5 16.8 10.9 16.8 L3.7 16.8 Q3.1 16.8 3.1 16.2 Z" fill="#fff" stroke="#7a7a7a" stroke-width="1"/><ellipse cx="3.9" cy="6.9" rx="2.05" ry="2.25" fill="#000"/><ellipse cx="10.3" cy="6.9" rx="2.05" ry="2.25" fill="#000"/><ellipse cx="7.2" cy="10.4" rx="1" ry="0.6" fill="#555"/><rect x="4.2" y="14.6" width="6.2" height="1.8" fill="#c4c4c4"/></svg>
<svg style="position:absolute;left:48.5px;top:624.5px;opacity:0.62" width="16" height="19" viewBox="-0.5 -0.5 16 19"><path d="M3.1 11.65 A6.8 6.8 0 1 1 11.5 11.65 L11.5 16.2 Q11.5 16.8 10.9 16.8 L3.7 16.8 Q3.1 16.8 3.1 16.2 Z" fill="#fff" stroke="#7a7a7a" stroke-width="1"/><ellipse cx="3.9" cy="6.9" rx="2.05" ry="2.25" fill="#000"/><ellipse cx="10.3" cy="6.9" rx="2.05" ry="2.25" fill="#000"/><ellipse cx="7.2" cy="10.4" rx="1" ry="0.6" fill="#555"/><rect x="4.2" y="14.6" width="6.2" height="1.8" fill="#c4c4c4"/></svg>
<svg style="position:absolute;left:61.5px;top:624.5px;opacity:0.62" width="16" height="19" viewBox="-0.5 -0.5 16 19"><path d="M3.1 11.65 A6.8 6.8 0 1 1 11.5 11.65 L11.5 16.2 Q11.5 16.8 10.9 16.8 L3.7 16.8 Q3.1 16.8 3.1 16.2 Z" fill="#fff" stroke="#7a7a7a" stroke-width="1"/><ellipse cx="3.9" cy="6.9" rx="2.05" ry="2.25" fill="#000"/><ellipse cx="10.3" cy="6.9" rx="2.05" ry="2.25" fill="#000"/><ellipse cx="7.2" cy="10.4" rx="1" ry="0.6" fill="#555"/><rect x="4.2" y="14.6" width="6.2" height="1.8" fill="#c4c4c4"/></svg>
<svg style="position:absolute;left:97.5px;top:624.5px;opacity:1" width="16" height="19" viewBox="-0.5 -0.5 16 19"><path d="M3.1 11.65 A6.8 6.8 0 1 1 11.5 11.65 L11.5 16.2 Q11.5 16.8 10.9 16.8 L3.7 16.8 Q3.1 16.8 3.1 16.2 Z" fill="#fff" stroke="#7a7a7a" stroke-width="1"/><ellipse cx="3.9" cy="6.9" rx="2.05" ry="2.25" fill="#000"/><ellipse cx="10.3" cy="6.9" rx="2.05" ry="2.25" fill="#000"/><ellipse cx="7.2" cy="10.4" rx="1" ry="0.6" fill="#555"/><rect x="4.2" y="14.6" width="6.2" height="1.8" fill="#c4c4c4"/></svg>
<svg style="position:absolute;left:109.5px;top:624.5px;opacity:0.62" width="16" height="19" viewBox="-0.5 -0.5 16 19"><path d="M3.1 11.65 A6.8 6.8 0 1 1 11.5 11.65 L11.5 16.2 Q11.5 16.8 10.9 16.8 L3.7 16.8 Q3.1 16.8 3.1 16.2 Z" fill="#fff" stroke="#7a7a7a" stroke-width="1"/><ellipse cx="3.9" cy="6.9" rx="2.05" ry="2.25" fill="#000"/><ellipse cx="10.3" cy="6.9" rx="2.05" ry="2.25" fill="#000"/><ellipse cx="7.2" cy="10.4" rx="1" ry="0.6" fill="#555"/><rect x="4.2" y="14.6" width="6.2" height="1.8" fill="#c4c4c4"/></svg>
<svg style="position:absolute;left:122.1px;top:624.5px;opacity:0.62" width="16" height="19" viewBox="-0.5 -0.5 16 19"><path d="M3.1 11.65 A6.8 6.8 0 1 1 11.5 11.65 L11.5 16.2 Q11.5 16.8 10.9 16.8 L3.7 16.8 Q3.1 16.8 3.1 16.2 Z" fill="#fff" stroke="#7a7a7a" stroke-width="1"/><ellipse cx="3.9" cy="6.9" rx="2.05" ry="2.25" fill="#000"/><ellipse cx="10.3" cy="6.9" rx="2.05" ry="2.25" fill="#000"/><ellipse cx="7.2" cy="10.4" rx="1" ry="0.6" fill="#555"/><rect x="4.2" y="14.6" width="6.2" height="1.8" fill="#c4c4c4"/></svg>
<svg style="position:absolute;left:132.3px;top:624.5px;opacity:0.62" width="16" height="19" viewBox="-0.5 -0.5 16 19"><path d="M3.1 11.65 A6.8 6.8 0 1 1 11.5 11.65 L11.5 16.2 Q11.5 16.8 10.9 16.8 L3.7 16.8 Q3.1 16.8 3.1 16.2 Z" fill="#fff" stroke="#7a7a7a" stroke-width="1"/><ellipse cx="3.9" cy="6.9" rx="2.05" ry="2.25" fill="#000"/><ellipse cx="10.3" cy="6.9" rx="2.05" ry="2.25" fill="#000"/><ellipse cx="7.2" cy="10.4" rx="1" ry="0.6" fill="#555"/><rect x="4.2" y="14.6" width="6.2" height="1.8" fill="#c4c4c4"/></svg>
<svg style="position:absolute;left:148.5px;top:624.5px;opacity:0.62" width="16" height="19" viewBox="-0.5 -0.5 16 19"><path d="M3.1 11.65 A6.8 6.8 0 1 1 11.5 11.65 L11.5 16.2 Q11.5 16.8 10.9 16.8 L3.7 16.8 Q3.1 16.8 3.1 16.2 Z" fill="#fff" stroke="#7a7a7a" stroke-width="1"/><ellipse cx="3.9" cy="6.9" rx="2.05" ry="2.25" fill="#000"/><ellipse cx="10.3" cy="6.9" rx="2.05" ry="2.25" fill="#000"/><ellipse cx="7.2" cy="10.4" rx="1" ry="0.6" fill="#555"/><rect x="4.2" y="14.6" width="6.2" height="1.8" fill="#c4c4c4"/></svg>
<svg style="position:absolute;left:160.5px;top:624.5px;opacity:0.62" width="16" height="19" viewBox="-0.5 -0.5 16 19"><path d="M3.1 11.65 A6.8 6.8 0 1 1 11.5 11.65 L11.5 16.2 Q11.5 16.8 10.9 16.8 L3.7 16.8 Q3.1 16.8 3.1 16.2 Z" fill="#fff" stroke="#7a7a7a" stroke-width="1"/><ellipse cx="3.9" cy="6.9" rx="2.05" ry="2.25" fill="#000"/><ellipse cx="10.3" cy="6.9" rx="2.05" ry="2.25" fill="#000"/><ellipse cx="7.2" cy="10.4" rx="1" ry="0.6" fill="#555"/><rect x="4.2" y="14.6" width="6.2" height="1.8" fill="#c4c4c4"/></svg>
<svg style="position:absolute;left:167.5px;top:624.5px;opacity:1" width="16" height="19" viewBox="-0.5 -0.5 16 19"><path d="M3.1 11.65 A6.8 6.8 0 1 1 11.5 11.65 L11.5 16.2 Q11.5 16.8 10.9 16.8 L3.7 16.8 Q3.1 16.8 3.1 16.2 Z" fill="#fff" stroke="#7a7a7a" stroke-width="1"/><ellipse cx="3.9" cy="6.9" rx="2.05" ry="2.25" fill="#000"/><ellipse cx="10.3" cy="6.9" rx="2.05" ry="2.25" fill="#000"/><ellipse cx="7.2" cy="10.4" rx="1" ry="0.6" fill="#555"/><rect x="4.2" y="14.6" width="6.2" height="1.8" fill="#c4c4c4"/></svg>
<svg style="position:absolute;left:185.9px;top:624.5px;opacity:0.62" width="16" height="19" viewBox="-0.5 -0.5 16 19"><path d="M3.1 11.65 A6.8 6.8 0 1 1 11.5 11.65 L11.5 16.2 Q11.5 16.8 10.9 16.8 L3.7 16.8 Q3.1 16.8 3.1 16.2 Z" fill="#fff" stroke="#7a7a7a" stroke-width="1"/><ellipse cx="3.9" cy="6.9" rx="2.05" ry="2.25" fill="#000"/><ellipse cx="10.3" cy="6.9" rx="2.05" ry="2.25" fill="#000"/><ellipse cx="7.2" cy="10.4" rx="1" ry="0.6" fill="#555"/><rect x="4.2" y="14.6" width="6.2" height="1.8" fill="#c4c4c4"/></svg>
<svg style="position:absolute;left:180.5px;top:624.5px;opacity:0.62" width="16" height="19" viewBox="-0.5 -0.5 16 19"><path d="M3.1 11.65 A6.8 6.8 0 1 1 11.5 11.65 L11.5 16.2 Q11.5 16.8 10.9 16.8 L3.7 16.8 Q3.1 16.8 3.1 16.2 Z" fill="#fff" stroke="#7a7a7a" stroke-width="1"/><ellipse cx="3.9" cy="6.9" rx="2.05" ry="2.25" fill="#000"/><ellipse cx="10.3" cy="6.9" rx="2.05" ry="2.25" fill="#000"/><ellipse cx="7.2" cy="10.4" rx="1" ry="0.6" fill="#555"/><rect x="4.2" y="14.6" width="6.2" height="1.8" fill="#c4c4c4"/></svg>
<svg style="position:absolute;left:198.1px;top:624.5px;opacity:0.62" width="16" height="19" viewBox="-0.5 -0.5 16 19"><path d="M3.1 11.65 A6.8 6.8 0 1 1 11.5 11.65 L11.5 16.2 Q11.5 16.8 10.9 16.8 L3.7 16.8 Q3.1 16.8 3.1 16.2 Z" fill="#fff" stroke="#7a7a7a" stroke-width="1"/><ellipse cx="3.9" cy="6.9" rx="2.05" ry="2.25" fill="#000"/><ellipse cx="10.3" cy="6.9" rx="2.05" ry="2.25" fill="#000"/><ellipse cx="7.2" cy="10.4" rx="1" ry="0.6" fill="#555"/><rect x="4.2" y="14.6" width="6.2" height="1.8" fill="#c4c4c4"/></svg>
<svg style="position:absolute;left:211.1px;top:624.5px;opacity:0.62" width="16" height="19" viewBox="-0.5 -0.5 16 19"><path d="M3.1 11.65 A6.8 6.8 0 1 1 11.5 11.65 L11.5 16.2 Q11.5 16.8 10.9 16.8 L3.7 16.8 Q3.1 16.8 3.1 16.2 Z" fill="#fff" stroke="#7a7a7a" stroke-width="1"/><ellipse cx="3.9" cy="6.9" rx="2.05" ry="2.25" fill="#000"/><ellipse cx="10.3" cy="6.9" rx="2.05" ry="2.25" fill="#000"/><ellipse cx="7.2" cy="10.4" rx="1" ry="0.6" fill="#555"/><rect x="4.2" y="14.6" width="6.2" height="1.8" fill="#c4c4c4"/></svg>
<svg style="position:absolute;left:227.3px;top:624.5px;opacity:0.62" width="16" height="19" viewBox="-0.5 -0.5 16 19"><path d="M3.1 11.65 A6.8 6.8 0 1 1 11.5 11.65 L11.5 16.2 Q11.5 16.8 10.9 16.8 L3.7 16.8 Q3.1 16.8 3.1 16.2 Z" fill="#fff" stroke="#7a7a7a" stroke-width="1"/><ellipse cx="3.9" cy="6.9" rx="2.05" ry="2.25" fill="#000"/><ellipse cx="10.3" cy="6.9" rx="2.05" ry="2.25" fill="#000"/><ellipse cx="7.2" cy="10.4" rx="1" ry="0.6" fill="#555"/><rect x="4.2" y="14.6" width="6.2" height="1.8" fill="#c4c4c4"/></svg>
<svg style="position:absolute;left:232.5px;top:624.5px;opacity:0.62" width="16" height="19" viewBox="-0.5 -0.5 16 19"><path d="M3.1 11.65 A6.8 6.8 0 1 1 11.5 11.65 L11.5 16.2 Q11.5 16.8 10.9 16.8 L3.7 16.8 Q3.1 16.8 3.1 16.2 Z" fill="#fff" stroke="#7a7a7a" stroke-width="1"/><ellipse cx="3.9" cy="6.9" rx="2.05" ry="2.25" fill="#000"/><ellipse cx="10.3" cy="6.9" rx="2.05" ry="2.25" fill="#000"/><ellipse cx="7.2" cy="10.4" rx="1" ry="0.6" fill="#555"/><rect x="4.2" y="14.6" width="6.2" height="1.8" fill="#c4c4c4"/></svg>
<svg style="position:absolute;left:250.5px;top:624.5px;opacity:0.62" width="16" height="19" viewBox="-0.5 -0.5 16 19"><path d="M3.1 11.65 A6.8 6.8 0 1 1 11.5 11.65 L11.5 16.2 Q11.5 16.8 10.9 16.8 L3.7 16.8 Q3.1 16.8 3.1 16.2 Z" fill="#fff" stroke="#7a7a7a" stroke-width="1"/><ellipse cx="3.9" cy="6.9" rx="2.05" ry="2.25" fill="#000"/><ellipse cx="10.3" cy="6.9" rx="2.05" ry="2.25" fill="#000"/><ellipse cx="7.2" cy="10.4" rx="1" ry="0.6" fill="#555"/><rect x="4.2" y="14.6" width="6.2" height="1.8" fill="#c4c4c4"/></svg>
<svg style="position:absolute;left:241.7px;top:624.5px;opacity:1" width="16" height="19" viewBox="-0.5 -0.5 16 19"><path d="M3.1 11.65 A6.8 6.8 0 1 1 11.5 11.65 L11.5 16.2 Q11.5 16.8 10.9 16.8 L3.7 16.8 Q3.1 16.8 3.1 16.2 Z" fill="#fff" stroke="#7a7a7a" stroke-width="1"/><ellipse cx="3.9" cy="6.9" rx="2.05" ry="2.25" fill="#000"/><ellipse cx="10.3" cy="6.9" rx="2.05" ry="2.25" fill="#000"/><ellipse cx="7.2" cy="10.4" rx="1" ry="0.6" fill="#555"/><rect x="4.2" y="14.6" width="6.2" height="1.8" fill="#c4c4c4"/></svg>
<svg style="position:absolute;left:272.5px;top:624.5px;opacity:0.62" width="16" height="19" viewBox="-0.5 -0.5 16 19"><path d="M3.1 11.65 A6.8 6.8 0 1 1 11.5 11.65 L11.5 16.2 Q11.5 16.8 10.9 16.8 L3.7 16.8 Q3.1 16.8 3.1 16.2 Z" fill="#fff" stroke="#7a7a7a" stroke-width="1"/><ellipse cx="3.9" cy="6.9" rx="2.05" ry="2.25" fill="#000"/><ellipse cx="10.3" cy="6.9" rx="2.05" ry="2.25" fill="#000"/><ellipse cx="7.2" cy="10.4" rx="1" ry="0.6" fill="#555"/><rect x="4.2" y="14.6" width="6.2" height="1.8" fill="#c4c4c4"/></svg>
<svg style="position:absolute;left:283.5px;top:624.5px;opacity:0.62" width="16" height="19" viewBox="-0.5 -0.5 16 19"><path d="M3.1 11.65 A6.8 6.8 0 1 1 11.5 11.65 L11.5 16.2 Q11.5 16.8 10.9 16.8 L3.7 16.8 Q3.1 16.8 3.1 16.2 Z" fill="#fff" stroke="#7a7a7a" stroke-width="1"/><ellipse cx="3.9" cy="6.9" rx="2.05" ry="2.25" fill="#000"/><ellipse cx="10.3" cy="6.9" rx="2.05" ry="2.25" fill="#000"/><ellipse cx="7.2" cy="10.4" rx="1" ry="0.6" fill="#555"/><rect x="4.2" y="14.6" width="6.2" height="1.8" fill="#c4c4c4"/></svg>
<svg style="position:absolute;left:276.5px;top:624.5px;opacity:0.62" width="16" height="19" viewBox="-0.5 -0.5 16 19"><path d="M3.1 11.65 A6.8 6.8 0 1 1 11.5 11.65 L11.5 16.2 Q11.5 16.8 10.9 16.8 L3.7 16.8 Q3.1 16.8 3.1 16.2 Z" fill="#fff" stroke="#7a7a7a" stroke-width="1"/><ellipse cx="3.9" cy="6.9" rx="2.05" ry="2.25" fill="#000"/><ellipse cx="10.3" cy="6.9" rx="2.05" ry="2.25" fill="#000"/><ellipse cx="7.2" cy="10.4" rx="1" ry="0.6" fill="#555"/><rect x="4.2" y="14.6" width="6.2" height="1.8" fill="#c4c4c4"/></svg>
<svg style="position:absolute;left:312.5px;top:624.5px;opacity:0.62" width="16" height="19" viewBox="-0.5 -0.5 16 19"><path d="M3.1 11.65 A6.8 6.8 0 1 1 11.5 11.65 L11.5 16.2 Q11.5 16.8 10.9 16.8 L3.7 16.8 Q3.1 16.8 3.1 16.2 Z" fill="#fff" stroke="#7a7a7a" stroke-width="1"/><ellipse cx="3.9" cy="6.9" rx="2.05" ry="2.25" fill="#000"/><ellipse cx="10.3" cy="6.9" rx="2.05" ry="2.25" fill="#000"/><ellipse cx="7.2" cy="10.4" rx="1" ry="0.6" fill="#555"/><rect x="4.2" y="14.6" width="6.2" height="1.8" fill="#c4c4c4"/></svg>
<svg style="position:absolute;left:341.5px;top:624.5px;opacity:0.62" width="16" height="19" viewBox="-0.5 -0.5 16 19"><path d="M3.1 11.65 A6.8 6.8 0 1 1 11.5 11.65 L11.5 16.2 Q11.5 16.8 10.9 16.8 L3.7 16.8 Q3.1 16.8 3.1 16.2 Z" fill="#fff" stroke="#7a7a7a" stroke-width="1"/><ellipse cx="3.9" cy="6.9" rx="2.05" ry="2.25" fill="#000"/><ellipse cx="10.3" cy="6.9" rx="2.05" ry="2.25" fill="#000"/><ellipse cx="7.2" cy="10.4" rx="1" ry="0.6" fill="#555"/><rect x="4.2" y="14.6" width="6.2" height="1.8" fill="#c4c4c4"/></svg>
<svg style="position:absolute;left:349.5px;top:624.5px;opacity:1" width="16" height="19" viewBox="-0.5 -0.5 16 19"><path d="M3.1 11.65 A6.8 6.8 0 1 1 11.5 11.65 L11.5 16.2 Q11.5 16.8 10.9 16.8 L3.7 16.8 Q3.1 16.8 3.1 16.2 Z" fill="#fff" stroke="#7a7a7a" stroke-width="1"/><ellipse cx="3.9" cy="6.9" rx="2.05" ry="2.25" fill="#000"/><ellipse cx="10.3" cy="6.9" rx="2.05" ry="2.25" fill="#000"/><ellipse cx="7.2" cy="10.4" rx="1" ry="0.6" fill="#555"/><rect x="4.2" y="14.6" width="6.2" height="1.8" fill="#c4c4c4"/></svg>
<svg style="position:absolute;left:365.5px;top:624.5px;opacity:0.62" width="16" height="19" viewBox="-0.5 -0.5 16 19"><path d="M3.1 11.65 A6.8 6.8 0 1 1 11.5 11.65 L11.5 16.2 Q11.5 16.8 10.9 16.8 L3.7 16.8 Q3.1 16.8 3.1 16.2 Z" fill="#fff" stroke="#7a7a7a" stroke-width="1"/><ellipse cx="3.9" cy="6.9" rx="2.05" ry="2.25" fill="#000"/><ellipse cx="10.3" cy="6.9" rx="2.05" ry="2.25" fill="#000"/><ellipse cx="7.2" cy="10.4" rx="1" ry="0.6" fill="#555"/><rect x="4.2" y="14.6" width="6.2" height="1.8" fill="#c4c4c4"/></svg>
<svg style="position:absolute;left:373.5px;top:624.5px;opacity:0.62" width="16" height="19" viewBox="-0.5 -0.5 16 19"><path d="M3.1 11.65 A6.8 6.8 0 1 1 11.5 11.65 L11.5 16.2 Q11.5 16.8 10.9 16.8 L3.7 16.8 Q3.1 16.8 3.1 16.2 Z" fill="#fff" stroke="#7a7a7a" stroke-width="1"/><ellipse cx="3.9" cy="6.9" rx="2.05" ry="2.25" fill="#000"/><ellipse cx="10.3" cy="6.9" rx="2.05" ry="2.25" fill="#000"/><ellipse cx="7.2" cy="10.4" rx="1" ry="0.6" fill="#555"/><rect x="4.2" y="14.6" width="6.2" height="1.8" fill="#c4c4c4"/></svg>
<svg style="position:absolute;left:369.5px;top:624.5px;opacity:0.62" width="16" height="19" viewBox="-0.5 -0.5 16 19"><path d="M3.1 11.65 A6.8 6.8 0 1 1 11.5 11.65 L11.5 16.2 Q11.5 16.8 10.9 16.8 L3.7 16.8 Q3.1 16.8 3.1 16.2 Z" fill="#fff" stroke="#7a7a7a" stroke-width="1"/><ellipse cx="3.9" cy="6.9" rx="2.05" ry="2.25" fill="#000"/><ellipse cx="10.3" cy="6.9" rx="2.05" ry="2.25" fill="#000"/><ellipse cx="7.2" cy="10.4" rx="1" ry="0.6" fill="#555"/><rect x="4.2" y="14.6" width="6.2" height="1.8" fill="#c4c4c4"/></svg>
<svg style="position:absolute;left:397.8px;top:624.5px;opacity:0.62" width="16" height="19" viewBox="-0.5 -0.5 16 19"><path d="M3.1 11.65 A6.8 6.8 0 1 1 11.5 11.65 L11.5 16.2 Q11.5 16.8 10.9 16.8 L3.7 16.8 Q3.1 16.8 3.1 16.2 Z" fill="#fff" stroke="#7a7a7a" stroke-width="1"/><ellipse cx="3.9" cy="6.9" rx="2.05" ry="2.25" fill="#000"/><ellipse cx="10.3" cy="6.9" rx="2.05" ry="2.25" fill="#000"/><ellipse cx="7.2" cy="10.4" rx="1" ry="0.6" fill="#555"/><rect x="4.2" y="14.6" width="6.2" height="1.8" fill="#c4c4c4"/></svg>
<svg style="position:absolute;left:411.2px;top:624.5px;opacity:0.62" width="16" height="19" viewBox="-0.5 -0.5 16 19"><path d="M3.1 11.65 A6.8 6.8 0 1 1 11.5 11.65 L11.5 16.2 Q11.5 16.8 10.9 16.8 L3.7 16.8 Q3.1 16.8 3.1 16.2 Z" fill="#fff" stroke="#7a7a7a" stroke-width="1"/><ellipse cx="3.9" cy="6.9" rx="2.05" ry="2.25" fill="#000"/><ellipse cx="10.3" cy="6.9" rx="2.05" ry="2.25" fill="#000"/><ellipse cx="7.2" cy="10.4" rx="1" ry="0.6" fill="#555"/><rect x="4.2" y="14.6" width="6.2" height="1.8" fill="#c4c4c4"/></svg>
<svg style="position:absolute;left:427.0px;top:624.5px;opacity:0.62" width="16" height="19" viewBox="-0.5 -0.5 16 19"><path d="M3.1 11.65 A6.8 6.8 0 1 1 11.5 11.65 L11.5 16.2 Q11.5 16.8 10.9 16.8 L3.7 16.8 Q3.1 16.8 3.1 16.2 Z" fill="#fff" stroke="#7a7a7a" stroke-width="1"/><ellipse cx="3.9" cy="6.9" rx="2.05" ry="2.25" fill="#000"/><ellipse cx="10.3" cy="6.9" rx="2.05" ry="2.25" fill="#000"/><ellipse cx="7.2" cy="10.4" rx="1" ry="0.6" fill="#555"/><rect x="4.2" y="14.6" width="6.2" height="1.8" fill="#c4c4c4"/></svg>
<svg style="position:absolute;left:436.5px;top:624.5px;opacity:0.62" width="16" height="19" viewBox="-0.5 -0.5 16 19"><path d="M3.1 11.65 A6.8 6.8 0 1 1 11.5 11.65 L11.5 16.2 Q11.5 16.8 10.9 16.8 L3.7 16.8 Q3.1 16.8 3.1 16.2 Z" fill="#fff" stroke="#7a7a7a" stroke-width="1"/><ellipse cx="3.9" cy="6.9" rx="2.05" ry="2.25" fill="#000"/><ellipse cx="10.3" cy="6.9" rx="2.05" ry="2.25" fill="#000"/><ellipse cx="7.2" cy="10.4" rx="1" ry="0.6" fill="#555"/><rect x="4.2" y="14.6" width="6.2" height="1.8" fill="#c4c4c4"/></svg>
<svg style="position:absolute;left:450.4px;top:624.5px;opacity:0.62" width="16" height="19" viewBox="-0.5 -0.5 16 19"><path d="M3.1 11.65 A6.8 6.8 0 1 1 11.5 11.65 L11.5 16.2 Q11.5 16.8 10.9 16.8 L3.7 16.8 Q3.1 16.8 3.1 16.2 Z" fill="#fff" stroke="#7a7a7a" stroke-width="1"/><ellipse cx="3.9" cy="6.9" rx="2.05" ry="2.25" fill="#000"/><ellipse cx="10.3" cy="6.9" rx="2.05" ry="2.25" fill="#000"/><ellipse cx="7.2" cy="10.4" rx="1" ry="0.6" fill="#555"/><rect x="4.2" y="14.6" width="6.2" height="1.8" fill="#c4c4c4"/></svg>
<svg style="position:absolute;left:461.5px;top:624.5px;opacity:0.62" width="16" height="19" viewBox="-0.5 -0.5 16 19"><path d="M3.1 11.65 A6.8 6.8 0 1 1 11.5 11.65 L11.5 16.2 Q11.5 16.8 10.9 16.8 L3.7 16.8 Q3.1 16.8 3.1 16.2 Z" fill="#fff" stroke="#7a7a7a" stroke-width="1"/><ellipse cx="3.9" cy="6.9" rx="2.05" ry="2.25" fill="#000"/><ellipse cx="10.3" cy="6.9" rx="2.05" ry="2.25" fill="#000"/><ellipse cx="7.2" cy="10.4" rx="1" ry="0.6" fill="#555"/><rect x="4.2" y="14.6" width="6.2" height="1.8" fill="#c4c4c4"/></svg>
<svg style="position:absolute;left:467.5px;top:624.5px;opacity:0.62" width="16" height="19" viewBox="-0.5 -0.5 16 19"><path d="M3.1 11.65 A6.8 6.8 0 1 1 11.5 11.65 L11.5 16.2 Q11.5 16.8 10.9 16.8 L3.7 16.8 Q3.1 16.8 3.1 16.2 Z" fill="#fff" stroke="#7a7a7a" stroke-width="1"/><ellipse cx="3.9" cy="6.9" rx="2.05" ry="2.25" fill="#000"/><ellipse cx="10.3" cy="6.9" rx="2.05" ry="2.25" fill="#000"/><ellipse cx="7.2" cy="10.4" rx="1" ry="0.6" fill="#555"/><rect x="4.2" y="14.6" width="6.2" height="1.8" fill="#c4c4c4"/></svg>
<svg style="position:absolute;left:502.6px;top:624.5px;opacity:0.78" width="16" height="19" viewBox="-0.5 -0.5 16 19"><path d="M3.1 11.65 A6.8 6.8 0 1 1 11.5 11.65 L11.5 16.2 Q11.5 16.8 10.9 16.8 L3.7 16.8 Q3.1 16.8 3.1 16.2 Z" fill="#fff" stroke="#7a7a7a" stroke-width="1"/><ellipse cx="3.9" cy="6.9" rx="2.05" ry="2.25" fill="#000"/><ellipse cx="10.3" cy="6.9" rx="2.05" ry="2.25" fill="#000"/><ellipse cx="7.2" cy="10.4" rx="1" ry="0.6" fill="#555"/><rect x="4.2" y="14.6" width="6.2" height="1.8" fill="#c4c4c4"/></svg>
<svg style="position:absolute;left:517.0px;top:624.5px;opacity:0.62" width="16" height="19" viewBox="-0.5 -0.5 16 19"><path d="M3.1 11.65 A6.8 6.8 0 1 1 11.5 11.65 L11.5 16.2 Q11.5 16.8 10.9 16.8 L3.7 16.8 Q3.1 16.8 3.1 16.2 Z" fill="#fff" stroke="#7a7a7a" stroke-width="1"/><ellipse cx="3.9" cy="6.9" rx="2.05" ry="2.25" fill="#000"/><ellipse cx="10.3" cy="6.9" rx="2.05" ry="2.25" fill="#000"/><ellipse cx="7.2" cy="10.4" rx="1" ry="0.6" fill="#555"/><rect x="4.2" y="14.6" width="6.2" height="1.8" fill="#c4c4c4"/></svg>
<svg style="position:absolute;left:521.2px;top:624.5px;opacity:0.62" width="16" height="19" viewBox="-0.5 -0.5 16 19"><path d="M3.1 11.65 A6.8 6.8 0 1 1 11.5 11.65 L11.5 16.2 Q11.5 16.8 10.9 16.8 L3.7 16.8 Q3.1 16.8 3.1 16.2 Z" fill="#fff" stroke="#7a7a7a" stroke-width="1"/><ellipse cx="3.9" cy="6.9" rx="2.05" ry="2.25" fill="#000"/><ellipse cx="10.3" cy="6.9" rx="2.05" ry="2.25" fill="#000"/><ellipse cx="7.2" cy="10.4" rx="1" ry="0.6" fill="#555"/><rect x="4.2" y="14.6" width="6.2" height="1.8" fill="#c4c4c4"/></svg>
<svg style="position:absolute;left:537.4px;top:624.5px;opacity:0.62" width="16" height="19" viewBox="-0.5 -0.5 16 19"><path d="M3.1 11.65 A6.8 6.8 0 1 1 11.5 11.65 L11.5 16.2 Q11.5 16.8 10.9 16.8 L3.7 16.8 Q3.1 16.8 3.1 16.2 Z" fill="#fff" stroke="#7a7a7a" stroke-width="1"/><ellipse cx="3.9" cy="6.9" rx="2.05" ry="2.25" fill="#000"/><ellipse cx="10.3" cy="6.9" rx="2.05" ry="2.25" fill="#000"/><ellipse cx="7.2" cy="10.4" rx="1" ry="0.6" fill="#555"/><rect x="4.2" y="14.6" width="6.2" height="1.8" fill="#c4c4c4"/></svg>
<svg style="position:absolute;left:551.3px;top:624.5px;opacity:0.62" width="16" height="19" viewBox="-0.5 -0.5 16 19"><path d="M3.1 11.65 A6.8 6.8 0 1 1 11.5 11.65 L11.5 16.2 Q11.5 16.8 10.9 16.8 L3.7 16.8 Q3.1 16.8 3.1 16.2 Z" fill="#fff" stroke="#7a7a7a" stroke-width="1"/><ellipse cx="3.9" cy="6.9" rx="2.05" ry="2.25" fill="#000"/><ellipse cx="10.3" cy="6.9" rx="2.05" ry="2.25" fill="#000"/><ellipse cx="7.2" cy="10.4" rx="1" ry="0.6" fill="#555"/><rect x="4.2" y="14.6" width="6.2" height="1.8" fill="#c4c4c4"/></svg>
<svg style="position:absolute;left:586.0px;top:624.5px;opacity:1" width="16" height="19" viewBox="-0.5 -0.5 16 19"><path d="M3.1 11.65 A6.8 6.8 0 1 1 11.5 11.65 L11.5 16.2 Q11.5 16.8 10.9 16.8 L3.7 16.8 Q3.1 16.8 3.1 16.2 Z" fill="#fff" stroke="#7a7a7a" stroke-width="1"/><ellipse cx="3.9" cy="6.9" rx="2.05" ry="2.25" fill="#000"/><ellipse cx="10.3" cy="6.9" rx="2.05" ry="2.25" fill="#000"/><ellipse cx="7.2" cy="10.4" rx="1" ry="0.6" fill="#555"/><rect x="4.2" y="14.6" width="6.2" height="1.8" fill="#c4c4c4"/></svg>
<svg style="position:absolute;left:580.5px;top:624.5px;opacity:0.62" width="16" height="19" viewBox="-0.5 -0.5 16 19"><path d="M3.1 11.65 A6.8 6.8 0 1 1 11.5 11.65 L11.5 16.2 Q11.5 16.8 10.9 16.8 L3.7 16.8 Q3.1 16.8 3.1 16.2 Z" fill="#fff" stroke="#7a7a7a" stroke-width="1"/><ellipse cx="3.9" cy="6.9" rx="2.05" ry="2.25" fill="#000"/><ellipse cx="10.3" cy="6.9" rx="2.05" ry="2.25" fill="#000"/><ellipse cx="7.2" cy="10.4" rx="1" ry="0.6" fill="#555"/><rect x="4.2" y="14.6" width="6.2" height="1.8" fill="#c4c4c4"/></svg>
<svg style="position:absolute;left:597.5px;top:624.5px;opacity:0.62" width="16" height="19" viewBox="-0.5 -0.5 16 19"><path d="M3.1 11.65 A6.8 6.8 0 1 1 11.5 11.65 L11.5 16.2 Q11.5 16.8 10.9 16.8 L3.7 16.8 Q3.1 16.8 3.1 16.2 Z" fill="#fff" stroke="#7a7a7a" stroke-width="1"/><ellipse cx="3.9" cy="6.9" rx="2.05" ry="2.25" fill="#000"/><ellipse cx="10.3" cy="6.9" rx="2.05" ry="2.25" fill="#000"/><ellipse cx="7.2" cy="10.4" rx="1" ry="0.6" fill="#555"/><rect x="4.2" y="14.6" width="6.2" height="1.8" fill="#c4c4c4"/></svg>
<svg style="position:absolute;left:617.5px;top:624.5px;opacity:0.62" width="16" height="19" viewBox="-0.5 -0.5 16 19"><path d="M3.1 11.65 A6.8 6.8 0 1 1 11.5 11.65 L11.5 16.2 Q11.5 16.8 10.9 16.8 L3.7 16.8 Q3.1 16.8 3.1 16.2 Z" fill="#fff" stroke="#7a7a7a" stroke-width="1"/><ellipse cx="3.9" cy="6.9" rx="2.05" ry="2.25" fill="#000"/><ellipse cx="10.3" cy="6.9" rx="2.05" ry="2.25" fill="#000"/><ellipse cx="7.2" cy="10.4" rx="1" ry="0.6" fill="#555"/><rect x="4.2" y="14.6" width="6.2" height="1.8" fill="#c4c4c4"/></svg>
<svg style="position:absolute;left:612.4px;top:624.5px;opacity:0.62" width="16" height="19" viewBox="-0.5 -0.5 16 19"><path d="M3.1 11.65 A6.8 6.8 0 1 1 11.5 11.65 L11.5 16.2 Q11.5 16.8 10.9 16.8 L3.7 16.8 Q3.1 16.8 3.1 16.2 Z" fill="#fff" stroke="#7a7a7a" stroke-width="1"/><ellipse cx="3.9" cy="6.9" rx="2.05" ry="2.25" fill="#000"/><ellipse cx="10.3" cy="6.9" rx="2.05" ry="2.25" fill="#000"/><ellipse cx="7.2" cy="10.4" rx="1" ry="0.6" fill="#555"/><rect x="4.2" y="14.6" width="6.2" height="1.8" fill="#c4c4c4"/></svg>
<svg style="position:absolute;left:632.4px;top:624.5px;opacity:0.62" width="16" height="19" viewBox="-0.5 -0.5 16 19"><path d="M3.1 11.65 A6.8 6.8 0 1 1 11.5 11.65 L11.5 16.2 Q11.5 16.8 10.9 16.8 L3.7 16.8 Q3.1 16.8 3.1 16.2 Z" fill="#fff" stroke="#7a7a7a" stroke-width="1"/><ellipse cx="3.9" cy="6.9" rx="2.05" ry="2.25" fill="#000"/><ellipse cx="10.3" cy="6.9" rx="2.05" ry="2.25" fill="#000"/><ellipse cx="7.2" cy="10.4" rx="1" ry="0.6" fill="#555"/><rect x="4.2" y="14.6" width="6.2" height="1.8" fill="#c4c4c4"/></svg>
<svg style="position:absolute;left:658.3px;top:624.5px;opacity:0.62" width="16" height="19" viewBox="-0.5 -0.5 16 19"><path d="M3.1 11.65 A6.8 6.8 0 1 1 11.5 11.65 L11.5 16.2 Q11.5 16.8 10.9 16.8 L3.7 16.8 Q3.1 16.8 3.1 16.2 Z" fill="#fff" stroke="#7a7a7a" stroke-width="1"/><ellipse cx="3.9" cy="6.9" rx="2.05" ry="2.25" fill="#000"/><ellipse cx="10.3" cy="6.9" rx="2.05" ry="2.25" fill="#000"/><ellipse cx="7.2" cy="10.4" rx="1" ry="0.6" fill="#555"/><rect x="4.2" y="14.6" width="6.2" height="1.8" fill="#c4c4c4"/></svg>
<svg style="position:absolute;left:694.5px;top:624.5px;opacity:1" width="16" height="19" viewBox="-0.5 -0.5 16 19"><path d="M3.1 11.65 A6.8 6.8 0 1 1 11.5 11.65 L11.5 16.2 Q11.5 16.8 10.9 16.8 L3.7 16.8 Q3.1 16.8 3.1 16.2 Z" fill="#fff" stroke="#7a7a7a" stroke-width="1"/><ellipse cx="3.9" cy="6.9" rx="2.05" ry="2.25" fill="#000"/><ellipse cx="10.3" cy="6.9" rx="2.05" ry="2.25" fill="#000"/><ellipse cx="7.2" cy="10.4" rx="1" ry="0.6" fill="#555"/><rect x="4.2" y="14.6" width="6.2" height="1.8" fill="#c4c4c4"/></svg>
<svg style="position:absolute;left:707.5px;top:624.5px;opacity:0.62" width="16" height="19" viewBox="-0.5 -0.5 16 19"><path d="M3.1 11.65 A6.8 6.8 0 1 1 11.5 11.65 L11.5 16.2 Q11.5 16.8 10.9 16.8 L3.7 16.8 Q3.1 16.8 3.1 16.2 Z" fill="#fff" stroke="#7a7a7a" stroke-width="1"/><ellipse cx="3.9" cy="6.9" rx="2.05" ry="2.25" fill="#000"/><ellipse cx="10.3" cy="6.9" rx="2.05" ry="2.25" fill="#000"/><ellipse cx="7.2" cy="10.4" rx="1" ry="0.6" fill="#555"/><rect x="4.2" y="14.6" width="6.2" height="1.8" fill="#c4c4c4"/></svg>
<svg style="position:absolute;left:725.8px;top:624.5px;opacity:0.62" width="16" height="19" viewBox="-0.5 -0.5 16 19"><path d="M3.1 11.65 A6.8 6.8 0 1 1 11.5 11.65 L11.5 16.2 Q11.5 16.8 10.9 16.8 L3.7 16.8 Q3.1 16.8 3.1 16.2 Z" fill="#fff" stroke="#7a7a7a" stroke-width="1"/><ellipse cx="3.9" cy="6.9" rx="2.05" ry="2.25" fill="#000"/><ellipse cx="10.3" cy="6.9" rx="2.05" ry="2.25" fill="#000"/><ellipse cx="7.2" cy="10.4" rx="1" ry="0.6" fill="#555"/><rect x="4.2" y="14.6" width="6.2" height="1.8" fill="#c4c4c4"/></svg>
<svg style="position:absolute;left:735.0px;top:624.5px;opacity:0.62" width="16" height="19" viewBox="-0.5 -0.5 16 19"><path d="M3.1 11.65 A6.8 6.8 0 1 1 11.5 11.65 L11.5 16.2 Q11.5 16.8 10.9 16.8 L3.7 16.8 Q3.1 16.8 3.1 16.2 Z" fill="#fff" stroke="#7a7a7a" stroke-width="1"/><ellipse cx="3.9" cy="6.9" rx="2.05" ry="2.25" fill="#000"/><ellipse cx="10.3" cy="6.9" rx="2.05" ry="2.25" fill="#000"/><ellipse cx="7.2" cy="10.4" rx="1" ry="0.6" fill="#555"/><rect x="4.2" y="14.6" width="6.2" height="1.8" fill="#c4c4c4"/></svg>
<svg style="position:absolute;left:731.2px;top:624.5px;opacity:0.62" width="16" height="19" viewBox="-0.5 -0.5 16 19"><path d="M3.1 11.65 A6.8 6.8 0 1 1 11.5 11.65 L11.5 16.2 Q11.5 16.8 10.9 16.8 L3.7 16.8 Q3.1 16.8 3.1 16.2 Z" fill="#fff" stroke="#7a7a7a" stroke-width="1"/><ellipse cx="3.9" cy="6.9" rx="2.05" ry="2.25" fill="#000"/><ellipse cx="10.3" cy="6.9" rx="2.05" ry="2.25" fill="#000"/><ellipse cx="7.2" cy="10.4" rx="1" ry="0.6" fill="#555"/><rect x="4.2" y="14.6" width="6.2" height="1.8" fill="#c4c4c4"/></svg>
<svg style="position:absolute;left:746.0px;top:624.5px;opacity:0.62" width="16" height="19" viewBox="-0.5 -0.5 16 19"><path d="M3.1 11.65 A6.8 6.8 0 1 1 11.5 11.65 L11.5 16.2 Q11.5 16.8 10.9 16.8 L3.7 16.8 Q3.1 16.8 3.1 16.2 Z" fill="#fff" stroke="#7a7a7a" stroke-width="1"/><ellipse cx="3.9" cy="6.9" rx="2.05" ry="2.25" fill="#000"/><ellipse cx="10.3" cy="6.9" rx="2.05" ry="2.25" fill="#000"/><ellipse cx="7.2" cy="10.4" rx="1" ry="0.6" fill="#555"/><rect x="4.2" y="14.6" width="6.2" height="1.8" fill="#c4c4c4"/></svg>
<svg style="position:absolute;left:762.2px;top:624.5px;opacity:0.62" width="16" height="19" viewBox="-0.5 -0.5 16 19"><path d="M3.1 11.65 A6.8 6.8 0 1 1 11.5 11.65 L11.5 16.2 Q11.5 16.8 10.9 16.8 L3.7 16.8 Q3.1 16.8 3.1 16.2 Z" fill="#fff" stroke="#7a7a7a" stroke-width="1"/><ellipse cx="3.9" cy="6.9" rx="2.05" ry="2.25" fill="#000"/><ellipse cx="10.3" cy="6.9" rx="2.05" ry="2.25" fill="#000"/><ellipse cx="7.2" cy="10.4" rx="1" ry="0.6" fill="#555"/><rect x="4.2" y="14.6" width="6.2" height="1.8" fill="#c4c4c4"/></svg>
<svg style="position:absolute;left:779.8px;top:624.5px;opacity:1" width="16" height="19" viewBox="-0.5 -0.5 16 19"><path d="M3.1 11.65 A6.8 6.8 0 1 1 11.5 11.65 L11.5 16.2 Q11.5 16.8 10.9 16.8 L3.7 16.8 Q3.1 16.8 3.1 16.2 Z" fill="#fff" stroke="#7a7a7a" stroke-width="1"/><ellipse cx="3.9" cy="6.9" rx="2.05" ry="2.25" fill="#000"/><ellipse cx="10.3" cy="6.9" rx="2.05" ry="2.25" fill="#000"/><ellipse cx="7.2" cy="10.4" rx="1" ry="0.6" fill="#555"/><rect x="4.2" y="14.6" width="6.2" height="1.8" fill="#c4c4c4"/></svg>
<svg style="position:absolute;left:805.5px;top:624.5px;opacity:0.62" width="16" height="19" viewBox="-0.5 -0.5 16 19"><path d="M3.1 11.65 A6.8 6.8 0 1 1 11.5 11.65 L11.5 16.2 Q11.5 16.8 10.9 16.8 L3.7 16.8 Q3.1 16.8 3.1 16.2 Z" fill="#fff" stroke="#7a7a7a" stroke-width="1"/><ellipse cx="3.9" cy="6.9" rx="2.05" ry="2.25" fill="#000"/><ellipse cx="10.3" cy="6.9" rx="2.05" ry="2.25" fill="#000"/><ellipse cx="7.2" cy="10.4" rx="1" ry="0.6" fill="#555"/><rect x="4.2" y="14.6" width="6.2" height="1.8" fill="#c4c4c4"/></svg>
<svg style="position:absolute;left:809.5px;top:624.5px;opacity:0.62" width="16" height="19" viewBox="-0.5 -0.5 16 19"><path d="M3.1 11.65 A6.8 6.8 0 1 1 11.5 11.65 L11.5 16.2 Q11.5 16.8 10.9 16.8 L3.7 16.8 Q3.1 16.8 3.1 16.2 Z" fill="#fff" stroke="#7a7a7a" stroke-width="1"/><ellipse cx="3.9" cy="6.9" rx="2.05" ry="2.25" fill="#000"/><ellipse cx="10.3" cy="6.9" rx="2.05" ry="2.25" fill="#000"/><ellipse cx="7.2" cy="10.4" rx="1" ry="0.6" fill="#555"/><rect x="4.2" y="14.6" width="6.2" height="1.8" fill="#c4c4c4"/></svg>
<svg style="position:absolute;left:793.5px;top:624.5px;opacity:0.62" width="16" height="19" viewBox="-0.5 -0.5 16 19"><path d="M3.1 11.65 A6.8 6.8 0 1 1 11.5 11.65 L11.5 16.2 Q11.5 16.8 10.9 16.8 L3.7 16.8 Q3.1 16.8 3.1 16.2 Z" fill="#fff" stroke="#7a7a7a" stroke-width="1"/><ellipse cx="3.9" cy="6.9" rx="2.05" ry="2.25" fill="#000"/><ellipse cx="10.3" cy="6.9" rx="2.05" ry="2.25" fill="#000"/><ellipse cx="7.2" cy="10.4" rx="1" ry="0.6" fill="#555"/><rect x="4.2" y="14.6" width="6.2" height="1.8" fill="#c4c4c4"/></svg>
<svg style="position:absolute;left:815.5px;top:624.5px;opacity:0.62" width="16" height="19" viewBox="-0.5 -0.5 16 19"><path d="M3.1 11.65 A6.8 6.8 0 1 1 11.5 11.65 L11.5 16.2 Q11.5 16.8 10.9 16.8 L3.7 16.8 Q3.1 16.8 3.1 16.2 Z" fill="#fff" stroke="#7a7a7a" stroke-width="1"/><ellipse cx="3.9" cy="6.9" rx="2.05" ry="2.25" fill="#000"/><ellipse cx="10.3" cy="6.9" rx="2.05" ry="2.25" fill="#000"/><ellipse cx="7.2" cy="10.4" rx="1" ry="0.6" fill="#555"/><rect x="4.2" y="14.6" width="6.2" height="1.8" fill="#c4c4c4"/></svg>
<svg style="position:absolute;left:828.5px;top:624.5px;opacity:0.62" width="16" height="19" viewBox="-0.5 -0.5 16 19"><path d="M3.1 11.65 A6.8 6.8 0 1 1 11.5 11.65 L11.5 16.2 Q11.5 16.8 10.9 16.8 L3.7 16.8 Q3.1 16.8 3.1 16.2 Z" fill="#fff" stroke="#7a7a7a" stroke-width="1"/><ellipse cx="3.9" cy="6.9" rx="2.05" ry="2.25" fill="#000"/><ellipse cx="10.3" cy="6.9" rx="2.05" ry="2.25" fill="#000"/><ellipse cx="7.2" cy="10.4" rx="1" ry="0.6" fill="#555"/><rect x="4.2" y="14.6" width="6.2" height="1.8" fill="#c4c4c4"/></svg>
<svg style="position:absolute;left:834.3px;top:624.5px;opacity:0.62" width="16" height="19" viewBox="-0.5 -0.5 16 19"><path d="M3.1 11.65 A6.8 6.8 0 1 1 11.5 11.65 L11.5 16.2 Q11.5 16.8 10.9 16.8 L3.7 16.8 Q3.1 16.8 3.1 16.2 Z" fill="#fff" stroke="#7a7a7a" stroke-width="1"/><ellipse cx="3.9" cy="6.9" rx="2.05" ry="2.25" fill="#000"/><ellipse cx="10.3" cy="6.9" rx="2.05" ry="2.25" fill="#000"/><ellipse cx="7.2" cy="10.4" rx="1" ry="0.6" fill="#555"/><rect x="4.2" y="14.6" width="6.2" height="1.8" fill="#c4c4c4"/></svg>
<svg style="position:absolute;left:844.6px;top:624.5px;opacity:1" width="16" height="19" viewBox="-0.5 -0.5 16 19"><path d="M3.1 11.65 A6.8 6.8 0 1 1 11.5 11.65 L11.5 16.2 Q11.5 16.8 10.9 16.8 L3.7 16.8 Q3.1 16.8 3.1 16.2 Z" fill="#fff" stroke="#7a7a7a" stroke-width="1"/><ellipse cx="3.9" cy="6.9" rx="2.05" ry="2.25" fill="#000"/><ellipse cx="10.3" cy="6.9" rx="2.05" ry="2.25" fill="#000"/><ellipse cx="7.2" cy="10.4" rx="1" ry="0.6" fill="#555"/><rect x="4.2" y="14.6" width="6.2" height="1.8" fill="#c4c4c4"/></svg>
<div class="btn" style="left:9px;width:81px;"></div>
<div class="t bt" style="left:23.5px;">Resume</div>
<svg style="position:absolute;left:65px;top:665px" width="10" height="10"><path d="M0.8 0.8 L8.8 4.8 L0.8 8.8 Z" fill="#000"/></svg>
<div class="btn" style="left:97px;width:91px;border:2px solid #0067c0;background:#f4f8fc;"><div style="position:absolute;left:0px;top:0px;right:0px;bottom:0px;border:1px dotted #000"></div></div>
<div class="t bt" style="left:111.5px;">Next turn</div>
<svg style="position:absolute;left:160px;top:665px" width="13" height="10"><path d="M1 5 H11" stroke="#000" stroke-width="1.1"/><path d="M8 2 L11.5 5 L8 8" fill="none" stroke="#000" stroke-width="1.1"/></svg>
<div class="btn" style="left:195px;width:65px;"></div>
<div class="t bt" style="left:209px;">Stop</div>
<div style="position:absolute;left:236px;top:666px;width:8px;height:8px;background:#000"></div>
<div class="btn" style="left:267px;width:79px;"></div>
<div class="t bt" style="left:281px;">Restart</div>
<svg style="position:absolute;left:321px;top:666px" width="9" height="9"><path d="M2.2 2.6 A3 3 0 1 0 6.4 2.2" fill="none" stroke="#000" stroke-width="1"/><path d="M1 1.6 L3.6 1.6 L2.6 4.2 Z" fill="#000"/></svg>
<div style="position:absolute;left:364px;top:658px;width:327px;height:3px;border:1px solid #d6d6d6;background:#e8e8e8"></div>
<svg style="position:absolute;left:468px;top:650px" width="12" height="20"><path d="M0 0 H11 V14 L5.5 19.5 L0 14 Z" fill="#0a6fd6"/></svg>
<div style="position:absolute;left:363.5px;top:669px;width:1px;height:6px;background:#a0a0a0"></div>
<div class="tl" style="left:344.0px">0</div>
<div style="position:absolute;left:399.7px;top:669px;width:1px;height:6px;background:#a0a0a0"></div>
<div class="tl" style="left:380.2px">5</div>
<div style="position:absolute;left:435.9px;top:669px;width:1px;height:6px;background:#a0a0a0"></div>
<div class="tl" style="left:416.4px">10</div>
<div style="position:absolute;left:472.1px;top:669px;width:1px;height:6px;background:#a0a0a0"></div>
<div class="tl" style="left:452.6px">15</div>
<div style="position:absolute;left:508.3px;top:669px;width:1px;height:6px;background:#a0a0a0"></div>
<div class="tl" style="left:488.8px">30</div>
<div style="position:absolute;left:544.5px;top:669px;width:1px;height:6px;background:#a0a0a0"></div>
<div class="tl" style="left:525.0px">50</div>
<div style="position:absolute;left:580.7px;top:669px;width:1px;height:6px;background:#a0a0a0"></div>
<div class="tl" style="left:561.2px">100</div>
<div style="position:absolute;left:616.9px;top:669px;width:1px;height:6px;background:#a0a0a0"></div>
<div class="tl" style="left:597.4px">200</div>
<div style="position:absolute;left:653.1px;top:669px;width:1px;height:6px;background:#a0a0a0"></div>
<div class="tl" style="left:633.6px">500</div>
<div style="position:absolute;left:689.3px;top:669px;width:1px;height:6px;background:#a0a0a0"></div>
<div class="tl" style="left:669.8px">max</div>
<div class="t" style="left:707px;top:661px;font-size:10.5px;line-height:19px;transform:scaleX(0.83);transform-origin:0 0">TPS</div>
<div style="position:absolute;left:730px;top:660px;width:30px;height:20px;border:1px solid #a0a0a0;background:#fff;font-size:11px;line-height:18px;padding-left:3px">15</div>
<div class="btn" style="left:766px;width:87px;"></div><div class="t bt" style="left:780px;">Default TPS</div>
<div id="frame"></div>
</body></html>
